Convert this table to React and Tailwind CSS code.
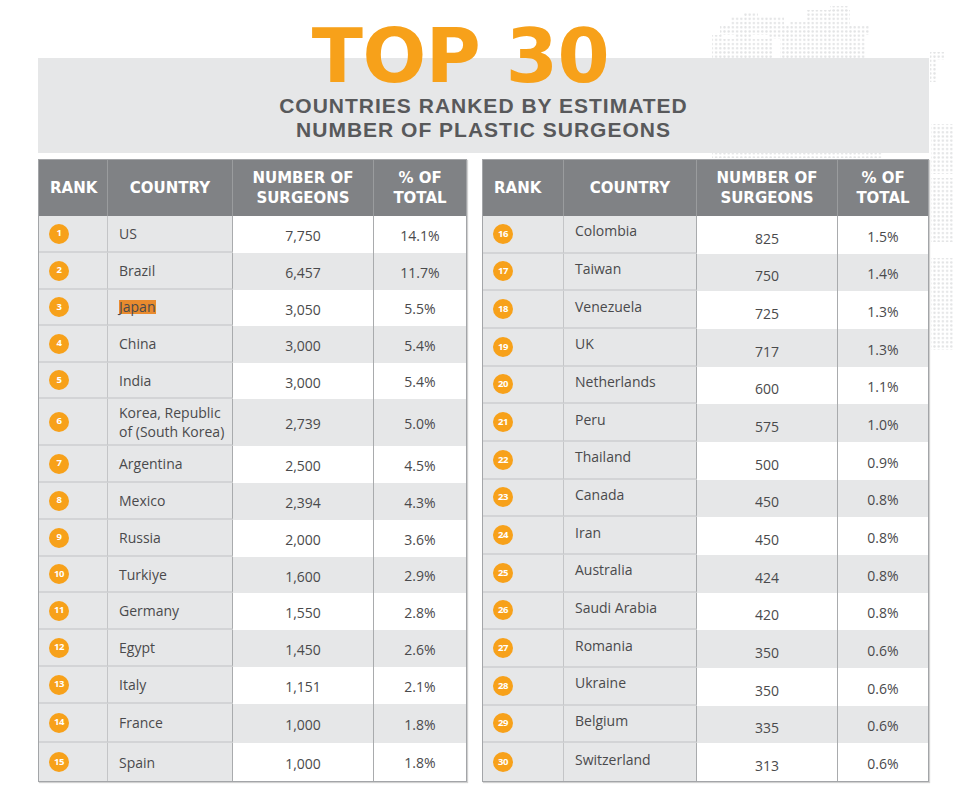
import React from 'react';

// Top 30 countries ranked by estimated number of plastic surgeons
const LEFT_ROWS = [
  { rank: 1, country: 'US', count: '7,750', pct: '14.1%', h: 'h-[37px]' },
  { rank: 2, country: 'Brazil', count: '6,457', pct: '11.7%', h: 'h-[37px]' },
  { rank: 3, country: 'Japan', count: '3,050', pct: '5.5%', h: 'h-[36px]', highlight: true },
  { rank: 4, country: 'China', count: '3,000', pct: '5.4%', h: 'h-[37px]' },
  { rank: 5, country: 'India', count: '3,000', pct: '5.4%', h: 'h-[36px]' },
  { rank: 6, country: 'Korea, Republic of (South Korea)', count: '2,739', pct: '5.0%', h: 'h-[47px]' },
  { rank: 7, country: 'Argentina', count: '2,500', pct: '4.5%', h: 'h-[37px]' },
  { rank: 8, country: 'Mexico', count: '2,394', pct: '4.3%', h: 'h-[37px]' },
  { rank: 9, country: 'Russia', count: '2,000', pct: '3.6%', h: 'h-[37px]' },
  { rank: 10, country: 'Turkiye', count: '1,600', pct: '2.9%', h: 'h-[36px]' },
  { rank: 11, country: 'Germany', count: '1,550', pct: '2.8%', h: 'h-[37px]' },
  { rank: 12, country: 'Egypt', count: '1,450', pct: '2.6%', h: 'h-[37px]' },
  { rank: 13, country: 'Italy', count: '1,151', pct: '2.1%', h: 'h-[37px]' },
  { rank: 14, country: 'France', count: '1,000', pct: '1.8%', h: 'h-[39px]' },
  { rank: 15, country: 'Spain', count: '1,000', pct: '1.8%', h: 'h-[38px]' },
];

const RIGHT_ROWS = [
  { rank: 16, country: 'Colombia', count: '825', pct: '1.5%' },
  { rank: 17, country: 'Taiwan', count: '750', pct: '1.4%' },
  { rank: 18, country: 'Venezuela', count: '725', pct: '1.3%' },
  { rank: 19, country: 'UK', count: '717', pct: '1.3%' },
  { rank: 20, country: 'Netherlands', count: '600', pct: '1.1%' },
  { rank: 21, country: 'Peru', count: '575', pct: '1.0%' },
  { rank: 22, country: 'Thailand', count: '500', pct: '0.9%' },
  { rank: 23, country: 'Canada', count: '450', pct: '0.8%' },
  { rank: 24, country: 'Iran', count: '450', pct: '0.8%' },
  { rank: 25, country: 'Australia', count: '424', pct: '0.8%' },
  { rank: 26, country: 'Saudi Arabia', count: '420', pct: '0.8%' },
  { rank: 27, country: 'Romania', count: '350', pct: '0.6%' },
  { rank: 28, country: 'Ukraine', count: '350', pct: '0.6%' },
  { rank: 29, country: 'Belgium', count: '335', pct: '0.6%' },
  { rank: 30, country: 'Switzerland', count: '313', pct: '0.6%' },
].map(r => ({ ...r, h: 'h-[37.66px]' }));

// faint dotted world map behind the banner
const DottedMap = () => (
  <svg className="absolute inset-0 z-0 pointer-events-none" width="953" height="799">
    <defs>
      <pattern id="dots" width="4.2" height="4.2" patternUnits="userSpaceOnUse">
        <circle cx="2.1" cy="2.1" r="1.2" fill="#e3e4e5" />
      </pattern>
    </defs>
    <rect x="830" y="6" width="18" height="5" fill="url(#dots)" />
    <rect x="744" y="13" width="14" height="4" fill="url(#dots)" />
    <rect x="806" y="10" width="44" height="12" fill="url(#dots)" />
    <rect x="730" y="17" width="54" height="9" fill="url(#dots)" />
    <rect x="790" y="22" width="60" height="4" fill="url(#dots)" />
    <rect x="720" y="26" width="150" height="9" fill="url(#dots)" />
    <rect x="712" y="35" width="10" height="4" fill="url(#dots)" />
    <rect x="735" y="35" width="16" height="4" fill="url(#dots)" />
    <rect x="768" y="35" width="98" height="4" fill="url(#dots)" />
    <rect x="712" y="39" width="60" height="19" fill="url(#dots)" />
    <rect x="780" y="39" width="86" height="19" fill="url(#dots)" />
    <rect x="712" y="153" width="170" height="5" fill="url(#dots)" />
    <rect x="930" y="52" width="14" height="8" fill="url(#dots)" />
    <rect x="930" y="60" width="6" height="22" fill="url(#dots)" />
    <rect x="931" y="124" width="22" height="50" fill="url(#dots)" />
    <rect x="931" y="178" width="22" height="64" fill="url(#dots)" />
    <rect x="931" y="258" width="22" height="92" fill="url(#dots)" />
  </svg>
);

const HeaderCell = ({ className, children }) => (
  <div className={`flex items-center border-r border-[#9a9c9e] last:border-r-0 text-white font-bold text-[15px] leading-[20px] ${className}`}>
    {children}
  </div>
);

const RankTable = ({ rows, widths, shiftCountry, shiftCount, shiftPct }) => (
  <div className="flex flex-col border border-[#a3a5a8] shadow-[1px_1px_1px_rgba(0,0,0,0.18)] bg-white">
    <div className="flex h-[56px] bg-[#808285] font-['DejaVu_Sans',sans-serif]">
      <HeaderCell className={`${widths[0]} pl-[11px]`}>RANK</HeaderCell>
      <HeaderCell className={`${widths[1]} justify-center`}>COUNTRY</HeaderCell>
      <HeaderCell className={`${widths[2]} justify-center text-center`}>NUMBER OF<br />SURGEONS</HeaderCell>
      <HeaderCell className={`${widths[3]} justify-center text-center`}>% OF<br />TOTAL</HeaderCell>
    </div>
    {rows.map((row, i) => {
      const zebra = i % 2 === 0 ? 'bg-white' : 'bg-[#e6e7e8]';
      const last = i === rows.length - 1;
      return (
        <div key={row.rank} className={`flex ${row.h} font-['Open_Sans',sans-serif] text-[14px] text-[#4a4a4c]`}>
          <div className={`${widths[0]} flex items-center pl-[10px] bg-[#e6e7e8] border-r border-[#c4c5c7] ${last ? '' : 'border-b-2 border-b-[#d3d4d6]'}`}>
            <span className="w-[20px] h-[20px] rounded-full bg-[#f7a11a] text-white text-[9.5px] font-bold flex items-center justify-center tracking-[-0.4px]">
              {row.rank}
            </span>
          </div>
          <div className={`${widths[1]} flex items-center pl-[11px] pr-1 bg-[#e6e7e8] border-r border-[#a9abad] leading-[19px] ${shiftCountry} ${last ? '' : 'border-b-2 border-b-[#d3d4d6]'}`}>
            {row.highlight ? (
              <span className="bg-[#e98b2e] leading-[14px] pr-[1px]">{row.country}</span>
            ) : (
              <span>{row.country}</span>
            )}
          </div>
          <div className={`${widths[2]} flex items-center justify-center border-r border-[#a9abad] ${zebra} ${shiftCount}`}>
            {row.count}
          </div>
          <div className={`${widths[3]} flex items-center justify-center ${zebra} ${shiftPct}`}>
            {row.pct}
          </div>
        </div>
      );
    })}
  </div>
);

export default function App() {
  return (
    <div className="relative w-[953px] h-[799px] bg-white overflow-hidden">
      <DottedMap />
      <div className="relative z-10 pt-[58px] pl-[38px]">
        <div className="w-[891px] h-[95px] bg-[#e6e7e8] flex flex-col items-center">
          <h1 className="-mt-[33px] mr-[46px] leading-[0.85] text-[75px] font-bold text-[#f7a11a] font-['DejaVu_Sans',sans-serif] tracking-[-0.5px]">
            TOP 30
          </h1>
          <p className="mt-[5px] text-center text-[21px] leading-[24.5px] font-bold text-[#58595b] tracking-[1px] font-['Liberation_Sans',Arial,sans-serif]">
            COUNTRIES RANKED BY ESTIMATED<br />NUMBER OF PLASTIC SURGEONS
          </p>
        </div>
        <div className="mt-[6px] flex gap-[15px]">
          <RankTable
            rows={LEFT_ROWS}
            widths={['w-[69px]', 'w-[125px]', 'w-[141px]', 'w-[92px]']}
            shiftCountry=""
            shiftCount="pt-[2px]"
            shiftPct="pt-[1px]"
          />
          <RankTable
            rows={RIGHT_ROWS}
            widths={['w-[81px]', 'w-[133px]', 'w-[141px]', 'w-[90px]']}
            shiftCountry="pb-[6px]"
            shiftCount="pt-[7px]"
            shiftPct="pt-[3px]"
          />
        </div>
      </div>
    </div>
  );
}
